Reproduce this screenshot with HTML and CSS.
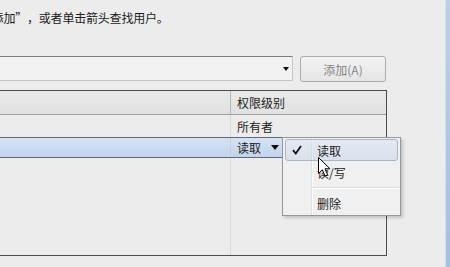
FILE: index.html
```html
<!DOCTYPE html>
<html>
<head>
<meta charset="utf-8">
<title>权限</title>
<link rel="stylesheet" href="styles.css">
</head>
<body>
<div class="page">
	<div class="content">
		<p class="intro"><span class="quoted">“添加”</span>，或者单击箭头查找用户。</p>
		<div class="add-row">
			<div class="combo"><span class="combo-arrow"></span></div>
			<button class="btn" disabled>添加(A)</button>
		</div>
		<div class="list">
			<div class="row list-head"><div class="cell name"></div><div class="cell perm">权限级别</div></div>
			<div class="row"><div class="cell name"></div><div class="cell perm">所有者</div></div>
			<div class="row selected"><div class="cell name"></div><div class="cell perm">读取<span class="tri"></span></div></div>
			<div class="row filler"><div class="cell name"></div></div>
		</div>
	</div>
	<div class="edge"></div>

	<!-- 右键菜单 -->
	<div class="menu">
		<div class="menu-item active">
			<span class="menu-icon">
				<svg width="10" height="10" viewBox="0 0 10 10"><path d="M1 5.2 L3.8 8.5 L9 1" fill="none" stroke="#111" stroke-width="1.8"/></svg>
			</span>
			<span class="menu-label">读取</span>
		</div>
		<div class="menu-item">
			<span class="menu-icon"></span>
			<span class="menu-label">读/写</span>
		</div>
		<div class="menu-sep"></div>
		<div class="menu-item">
			<span class="menu-icon"></span>
			<span class="menu-label">删除</span>
		</div>
	</div>

	<svg class="cursor" width="13" height="21" viewBox="0 0 13 21">
		<path d="M0.5 0.5 L0.5 16.5 L4.3 12.8 L7 19 L9.6 17.9 L7 11.8 L12 11.8 Z" fill="#fff" stroke="#000" stroke-width="1"/>
	</svg>
</div>
</body>
</html>
```

FILE: styles.css
```css
body {
	margin: 0;
	background: #ececec;
	font-family: "Noto Sans CJK SC", "Microsoft YaHei", sans-serif;
	font-size: 12px;
	color: #1b1b1b;
	overflow: hidden;
}
.page {
	position: relative;
	display: flex;
	height: 267px;
}
.content {
	flex: 1;
	min-width: 0;
}
.edge {
	width: 4px;
	background: linear-gradient(#bccfe7, #a6c0df);
	border-left: 1px solid #d3dfee;
}
.intro {
	margin: 10px 0 0;
	line-height: 16px;
	white-space: nowrap;
	letter-spacing: -0.2px;
}
.quoted {
	display: inline-block;
	width: 60px;
	margin-left: -33px;
	text-align: right;
	font-feature-settings: "fwid";
}
.add-row {
	display: flex;
	gap: 7px;
	margin: 30px 0 0 -20px;
}
.combo {
	width: 313px;
	height: 25px;
	box-sizing: border-box;
	border: 1px solid;
	border-color: #7c7c7c #c6c6c6 #c6c6c6 #a8a8a8;
	background: #f2f2f2;
	display: flex;
	justify-content: flex-end;
	align-items: center;
	padding-right: 3px;
}
.combo-arrow {
	width: 0;
	height: 0;
	border-left: 3.5px solid transparent;
	border-right: 3.5px solid transparent;
	border-top: 4px solid #111;
}
.btn {
	width: 86px;
	height: 26px;
	padding: 0;
	border: 1px solid #acacac;
	border-radius: 3px;
	background: linear-gradient(#f3f3f3, #e5e5e5);
	color: #868686;
	font: inherit;
}
.list {
	margin: 8px 0 0 -20px;
	width: 407px;
	height: 166px;
	box-sizing: border-box;
	border: 1px solid #4d4d4d;
	border-left: none;
	display: flex;
	flex-direction: column;
}
.row {
	display: flex;
	align-items: center;
	height: 22px;
	box-sizing: border-box;
}
.cell.name {
	width: 251px;
	align-self: stretch;
	box-sizing: border-box;
	border-right: 1px solid #dadada;
}
.perm {
	padding-left: 6px;
	display: flex;
	align-items: center;
}
.list-head {
	height: 24px;
	background: linear-gradient(#e9e9e9, #e1e1e1);
	border-bottom: 1px solid #9f9f9f;
}
.list-head .name {
	border-right-color: #b5b5b5;
}
.selected {
	height: 21px;
	background: linear-gradient(#d5e2f3, #c2d4ec);
	border-top: 1px solid #5f6b7a;
	border-bottom: 1px solid #5f6b7a;
}
.selected .name {
	border-right-color: #c3cfe0;
}
.tri {
	width: 0;
	height: 0;
	margin-left: 10px;
	border-left: 4px solid transparent;
	border-right: 4px solid transparent;
	border-top: 5px solid #111;
}
.filler {
	flex: 1;
}

/* 右键菜单 */
.menu {
	position: absolute;
	left: 282px;
	top: 137px;
	width: 119px;
	height: 79px;
	box-sizing: border-box;
	padding: 1px;
	border: 1px solid #979797;
	background: linear-gradient(to right, transparent 28px, #e0e0e0 28px, #e0e0e0 29px, #fbfbfb 29px, #fbfbfb 30px, transparent 30px) #f0f0f0;
	box-shadow: 2px 2px 3px rgba(0, 0, 0, .18);
}
.menu-item {
	display: flex;
	align-items: center;
	height: 22px;
	margin: 0 1px;
	box-sizing: border-box;
	border: 1px solid transparent;
	border-radius: 3px;
}
.menu-item.active {
	border-color: #a9b6c8;
	background: linear-gradient(rgba(214, 226, 244, .45), rgba(190, 206, 230, .45));
}
.menu-icon {
	width: 31px;
	box-sizing: border-box;
	padding-left: 6px;
	display: flex;
	align-items: center;
}
.menu-sep {
	height: 9px;
	margin-left: 28px;
	background: linear-gradient(transparent 4px, #dcdcdc 4px, #dcdcdc 5px, #fff 5px, #fff 6px, transparent 6px);
}
.cursor {
	position: absolute;
	left: 318px;
	top: 157px;
}
```
